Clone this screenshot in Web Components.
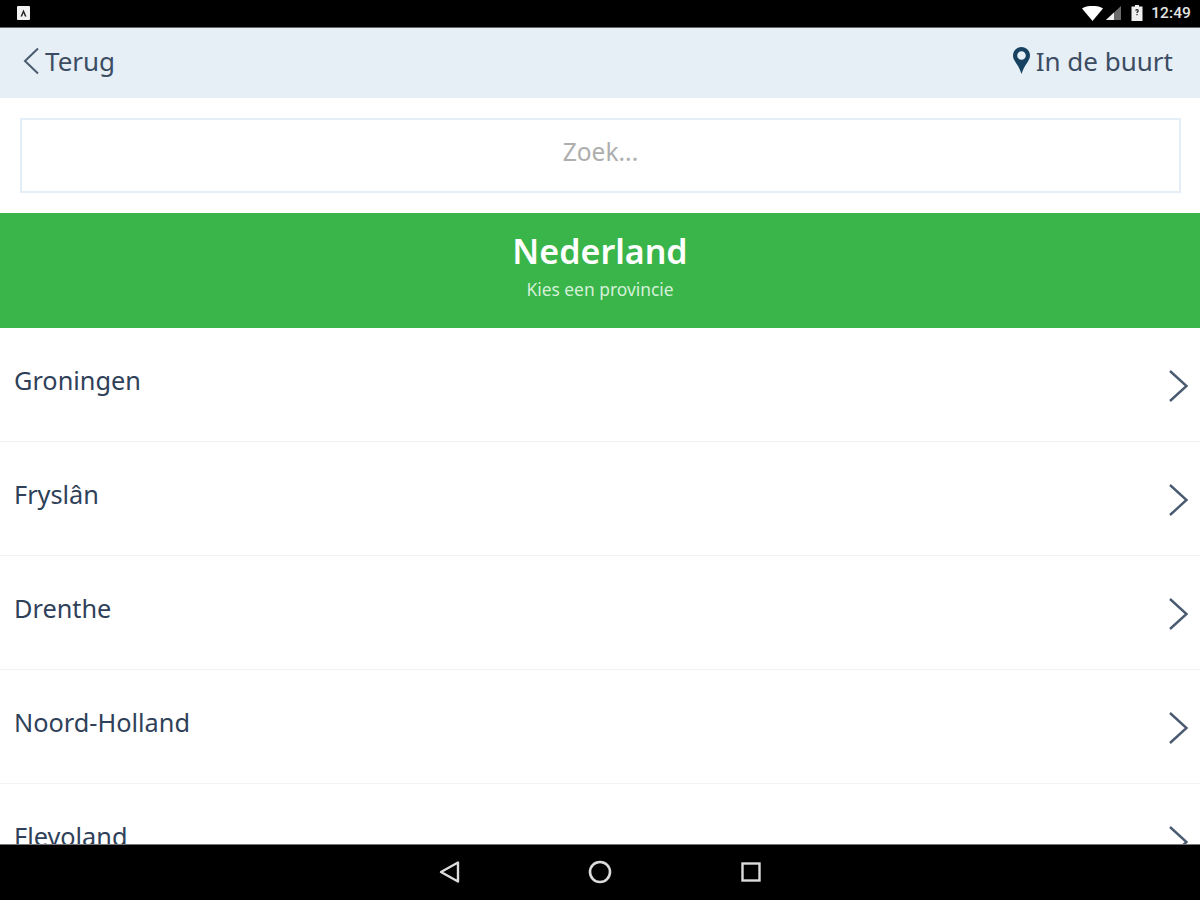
<!DOCTYPE html>
<html lang="nl">
<head>
<meta charset="utf-8">
<title>Nederland</title>
<style>
  html, body { margin: 0; height: 100%; background: #fff; overflow: hidden; }
  body { font-family: "Noto Sans", "Open Sans", sans-serif; }
  app-shell { height: 900px; }
</style>
</head>
<body>
<app-shell>
  <status-bar slot="status" time="12:49"></status-bar>
  <top-nav slot="nav"></top-nav>
  <search-box slot="search" placeholder="Zoek..."></search-box>
  <region-header slot="header" title="Nederland" subtitle="Kies een provincie"></region-header>
  <province-row>Groningen</province-row>
  <province-row>Fryslân</province-row>
  <province-row>Drenthe</province-row>
  <province-row>Noord-Holland</province-row>
  <province-row>Flevoland</province-row>
  <system-nav slot="system"></system-nav>
</app-shell>

<script>
// ── shell ──────────────────────────────────────────────────────────────────
class AppShell extends HTMLElement {
  constructor() {
    super()
    this.attachShadow({ mode: 'open' })
    this.shadowRoot.innerHTML = `
      <style>
        :host { display: flex; flex-direction: column; width: 100%; }
        .list { flex: 1; min-height: 0; overflow: hidden; }
      </style>
      <slot name="status"></slot>
      <slot name="nav"></slot>
      <slot name="search"></slot>
      <slot name="header"></slot>
      <div class="list"><slot></slot></div>
      <slot name="system"></slot>
    `
  }
}

// ── android status bar ─────────────────────────────────────────────────────
class StatusBar extends HTMLElement {
  constructor() {
    super()
    this.attachShadow({ mode: 'open' })
  }

  connectedCallback() {
    this.shadowRoot.innerHTML = `
      <style>
        :host {
          display: flex; align-items: center; height: 28px; flex: none; box-sizing: border-box;
          background: #000; color: #e4e4e4; padding: 0 9px 1px 17px;
          border-bottom: 1px solid #666;
        }
        .note { width: 13px; height: 14px; display: block; }
        .spacer { flex: 1; }
        .wifi { width: 21px; height: 15px; display: block; }
        .signal { width: 15px; height: 14px; display: block; margin-left: 3px; }
        .battery { width: 12px; height: 16px; display: block; margin-left: 10px; }
        .time { font: 500 15.5px/26px Roboto, sans-serif; margin-left: 8px; letter-spacing: .1px; }
      </style>
      <svg class="note" viewBox="0 0 13 14">
        <rect width="13" height="14" rx="1" fill="#f2f2f2"/>
        <path d="M3.5 10.5 L6.5 3.5 L9.5 10.5 H7.9 L6.5 7 L5.1 10.5Z" fill="#222"/>
      </svg>
      <span class="spacer"></span>
      <svg class="wifi" viewBox="0 0 21 15"><path d="M0 2.5 C5.5 -1 15.5 -1 21 2.5 L10.5 15Z" fill="#fff"/></svg>
      <svg class="signal" viewBox="0 0 15 14">
        <path d="M0 14 L15 0 V14Z" fill="#6b6b6b"/>
        <path d="M0 14 L8 6.5 V14Z" fill="#f0f0f0"/>
      </svg>
      <svg class="battery" viewBox="0 0 11 16">
        <path d="M3.5 0 H7.5 V1.5 H11 V16 H0 V1.5 H3.5Z" fill="#f0f0f0"/>
        <path d="M5.5 4 a1.8 1.8 0 0 1 1.8 1.8 c0 1 -.9 1.3 -1.2 2.2 h-1.2 c0 -1.4 1.2 -1.5 1.2 -2.2 a.6 .6 0 0 0 -1.2 0 H3.7 A1.8 1.8 0 0 1 5.5 4Z M4.9 9 h1.2 v1.2 H4.9Z" fill="#222"/>
      </svg>
      <span class="time">${this.getAttribute('time') || ''}</span>
    `
  }
}

// ── top nav ────────────────────────────────────────────────────────────────
class TopNav extends HTMLElement {
  constructor() {
    super()
    this.attachShadow({ mode: 'open' })
    this.shadowRoot.innerHTML = `
      <style>
        :host {
          display: flex; align-items: center; justify-content: space-between;
          height: 70px; flex: none; box-sizing: border-box;
          padding: 0 27px 5px 23px;
          background: #e6eff6; color: #3c4d63;
          font-size: 26px; line-height: 36px;
        }
        a { display: flex; align-items: center; }
        .back { width: 16px; height: 28px; margin-right: 6px; display: block; }
        .pin { width: 17px; height: 27px; margin-right: 6px; display: block; }
      </style>
      <a>
        <svg class="back" viewBox="0 0 16 28"><path d="M15 1.5 L2 14 L15 26.5" fill="none" stroke="#4a5a70" stroke-width="2"/></svg>
        <span>Terug</span>
      </a>
      <a>
        <svg class="pin" viewBox="0 0 17 27">
          <path fill-rule="evenodd" d="M8.5 0 C3.8 0 0 3.7 0 8.4 C0 14 5.5 17 8.5 27 C11.5 17 17 14 17 8.4 C17 3.7 13.2 0 8.5 0Z M8.5 4.2 a4.3 4.3 0 1 1 0 8.6 a4.3 4.3 0 1 1 0 -8.6Z" fill="#17425f"/>
        </svg>
        <span>In de buurt</span>
      </a>
    `
  }
}

// ── search ─────────────────────────────────────────────────────────────────
class SearchBox extends HTMLElement {
  constructor() {
    super()
    this.attachShadow({ mode: 'open' })
  }

  connectedCallback() {
    this.shadowRoot.innerHTML = `
      <style>
        :host { display: block; flex: none; padding: 20px 19px 20px 20px; background: #fff; }
        .field {
          height: 75px; box-sizing: border-box; padding-bottom: 8px;
          border: 2px solid #e3eef8;
          display: flex; align-items: center; justify-content: center;
          color: #aeaeae; font-size: 24.5px;
        }
      </style>
      <div class="field">${this.getAttribute('placeholder') || ''}</div>
    `
  }
}

// ── green header ───────────────────────────────────────────────────────────
class RegionHeader extends HTMLElement {
  constructor() {
    super()
    this.attachShadow({ mode: 'open' })
  }

  connectedCallback() {
    this.shadowRoot.innerHTML = `
      <style>
        :host {
          display: block; flex: none; height: 115px; box-sizing: border-box;
          padding-top: 16px; background: #3ab54a; color: #fff; text-align: center;
        }
        h1 { margin: 0; font-size: 34px; line-height: 44px; font-weight: 600; }
        p { margin: 6px 0 0; font-size: 17.4px; line-height: 20px; color: #d5f0d8; }
      </style>
      <h1>${this.getAttribute('title') || ''}</h1>
      <p>${this.getAttribute('subtitle') || ''}</p>
    `
    this.removeAttribute('title')
  }
}

// ── list row ───────────────────────────────────────────────────────────────
class ProvinceRow extends HTMLElement {
  constructor() {
    super()
    this.attachShadow({ mode: 'open' })
    this.shadowRoot.innerHTML = `
      <style>
        :host {
          display: flex; justify-content: space-between; box-sizing: border-box;
          height: 114px; padding: 34px 11px 0 14px;
          border-bottom: 1px solid #f1f3f4;
          color: #2f4159; font-size: 25.3px; line-height: 36px;
        }
        svg { width: 21px; height: 34px; margin-top: 7px; display: block; }
      </style>
      <span><slot></slot></span>
      <svg viewBox="0 0 21 34"><path d="M2 2 L18.5 17 L2 32" fill="none" stroke="#4a5a70" stroke-width="2.4"/></svg>
    `
  }
}

// ── android nav bar ────────────────────────────────────────────────────────
class SystemNav extends HTMLElement {
  constructor() {
    super()
    this.attachShadow({ mode: 'open' })
    this.shadowRoot.innerHTML = `
      <style>
        :host {
          display: flex; align-items: center; justify-content: center; gap: 127px;
          height: 56px; flex: none; background: #000; box-sizing: border-box;
          border-top: 1px solid #777; padding-bottom: 1px;
        }
        svg { width: 24px; height: 24px; display: block; }
      </style>
      <svg viewBox="0 0 24 24"><path d="M21 2.5 V21.5 L4 12Z" fill="none" stroke="#dcdcdc" stroke-width="2.4" stroke-linejoin="round"/></svg>
      <svg viewBox="0 0 24 24"><circle cx="12" cy="12" r="10" fill="none" stroke="#dcdcdc" stroke-width="2.6"/></svg>
      <svg viewBox="0 0 24 24"><rect x="3.5" y="3.5" width="17" height="17" fill="none" stroke="#dcdcdc" stroke-width="2.4"/></svg>
    `
  }
}

customElements.define('app-shell', AppShell)
customElements.define('status-bar', StatusBar)
customElements.define('top-nav', TopNav)
customElements.define('search-box', SearchBox)
customElements.define('region-header', RegionHeader)
customElements.define('province-row', ProvinceRow)
customElements.define('system-nav', SystemNav)
</script>
</body>
</html>
